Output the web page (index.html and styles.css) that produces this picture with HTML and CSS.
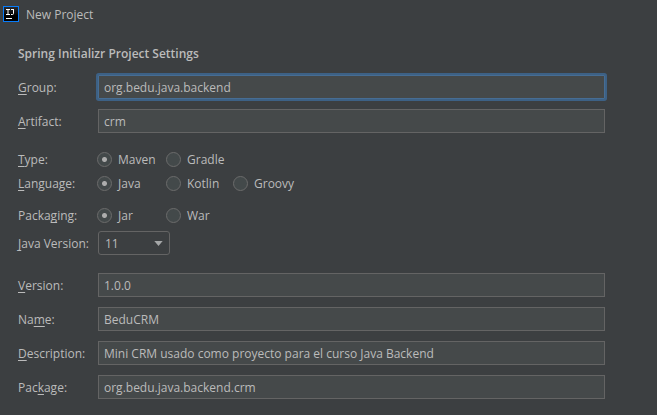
FILE: index.html
```html
<!DOCTYPE html>
<html lang="en">
<head>
<meta charset="utf-8">
<title>New Project</title>
<link rel="stylesheet" href="styles.css">
</head>
<body>
<header class="titlebar">
  <svg class="logo" viewBox="0 0 16 16" aria-hidden="true">
    <defs><linearGradient id="tile" x1="0" y1="0" x2="0" y2="1"><stop offset="0" stop-color="#2b2b2e"/><stop offset=".6" stop-color="#000"/></linearGradient></defs>
    <rect width="16" height="16" fill="#087cfa"/>
    <rect x="1" y="1" width="14" height="14" fill="url(#tile)"/>
    <path d="M3 3.500h4M5 3.500v5M3 8.500h4M8 3.500h3M10.500 3v4.500q0 1-1 1H8" fill="none" stroke="#fff" stroke-width="1"/>
    <rect x="3" y="12" width="6" height="1" fill="#fff"/>
  </svg>
  <span class="caption">New Project</span>
</header>
<main>
  <h1>Spring Initializr Project Settings</h1>
  <form>
    <div class="fields">
      <div class="row"><label class="caption" for="group"><u>G</u>roup:</label><input class="text focused" id="group" type="text" value="org.bedu.java.backend"></div>
      <div class="row"><label class="caption" for="artifact"><u>A</u>rtifact:</label><input class="text" id="artifact" type="text" value="crm"></div>
    </div>
    <div class="choices">
      <div class="row" role="radiogroup" aria-labelledby="type">
        <span class="caption" id="type"><u>T</u>ype:</span>
        <div class="options">
          <label><input type="radio" name="type" checked><span class="caption">Maven</span></label>
          <label><input type="radio" name="type"><span class="caption">Gradle</span></label>
        </div>
      </div>
      <div class="row" role="radiogroup" aria-labelledby="language">
        <span class="caption" id="language"><u>L</u>anguage:</span>
        <div class="options">
          <label><input type="radio" name="language" checked><span class="caption">Java</span></label>
          <label><input type="radio" name="language"><span class="caption">Kotlin</span></label>
          <label><input type="radio" name="language"><span class="caption">Groovy</span></label>
        </div>
      </div>
    </div>
    <div class="build">
      <div class="row" role="radiogroup" aria-labelledby="packaging">
        <span class="caption" id="packaging">Packa<u>g</u>ing:</span>
        <div class="options">
          <label><input type="radio" name="packaging" checked><span class="caption">Jar</span></label>
          <label><input type="radio" name="packaging"><span class="caption">War</span></label>
        </div>
      </div>
      <div class="row">
        <label class="caption" for="java"><u>J</u>ava Version:</label>
        <div class="picker">
          <select id="java"><option>11</option></select>
          <svg class="arrow" viewBox="0 0 10 6" aria-hidden="true"><path d="M0 0h10L5 6z" fill="#a5a7a8"/></svg>
        </div>
      </div>
    </div>
    <div class="fields">
      <div class="row"><label class="caption" for="version"><u>V</u>ersion:</label><input class="text" id="version" type="text" value="1.0.0"></div>
      <div class="row"><label class="caption" for="name">Na<u>m</u>e:</label><input class="text" id="name" type="text" value="BeduCRM"></div>
      <div class="row"><label class="caption" for="description"><u>D</u>escription:</label><input class="text" id="description" type="text" value="Mini CRM usado como proyecto para el curso Java Backend"></div>
      <div class="row"><label class="caption" for="package">Pac<u>k</u>age:</label><input class="text" id="package" type="text" value="org.bedu.java.backend.crm"></div>
    </div>
  </form>
</main>
</body>
</html>
```
FILE: styles.css
```css
* {
  box-sizing: border-box;
}

body {
  margin: 0;
  background: #3c3f41;
  color: #bbbbbb;
  font: 12px/16px "Segoe UI", "Open Sans", "Noto Sans", sans-serif;
}

.titlebar {
  display: flex;
  align-items: center;
  gap: 7px;
  height: 28px;
  padding-left: 3px;
}

.logo {
  width: 16px;
  height: 16px;
}

.caption {
  padding-top: 2px;
}

main {
  padding: 18px 52px 16px 18px;
}

h1 {
  margin: 0 0 13px;
  font-size: 12px;
  font-weight: 600;
  line-height: 16px;
}

u {
  text-decoration-skip-ink: none;
  text-underline-offset: 2px;
}

.fields {
  display: grid;
  gap: 10px;
}

.choices {
  margin: 14px 0 8px;
}

.build {
  display: grid;
  gap: 4px;
  margin-bottom: 18px;
}

.row {
  display: grid;
  grid-template-columns: 80px 1fr;
  align-items: center;
  height: 24px;
  white-space: nowrap;
}

.text,
select {
  height: 24px;
  margin: 0;
  border: 1px solid #646464;
  color: #bbbbbb;
  font: inherit;
  outline: none;
}

.text {
  width: 100%;
  min-width: 0;
  padding: 0 5px;
  background: #45494a;
}

.focused {
  border-color: #466d94;
  border-radius: 1px;
  box-shadow: 0 0 0 2px #3d6185;
}

.options {
  display: grid;
  grid-template-columns: 69px 67px auto;
  justify-content: start;
  margin-left: -1px;
}

.options label {
  display: flex;
  align-items: center;
  gap: 6px;
}

.options input {
  appearance: none;
  width: 15px;
  height: 15px;
  margin: 0;
  border: 1px solid #6b6b6b;
  border-radius: 50%;
  background: #43494a;
}

.options input:checked {
  background: radial-gradient(circle, #adadad 2px, #43494a 3px);
}

.picker {
  position: relative;
  width: 72px;
  height: 24px;
}

select {
  appearance: none;
  width: 100%;
  padding: 1px 24px 0 6px;
  border-radius: 3px;
  background: #3c3f41;
}

.arrow {
  position: absolute;
  top: 10px;
  right: 7px;
  width: 9px;
  height: 5px;
  pointer-events: none;
}
```
